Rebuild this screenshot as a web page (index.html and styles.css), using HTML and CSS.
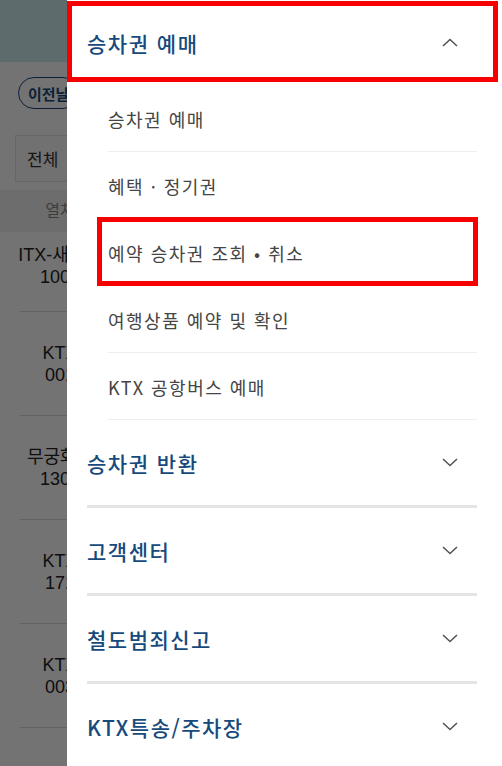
FILE: index.html
```html
<!DOCTYPE html>
<html lang="ko">
<head>
    <meta charset="UTF-8">
    <meta name="viewport" content="width=device-width, initial-scale=1.0">
    <title>승차권 예매 메뉴</title>
    <link rel="stylesheet" href="styles.css">
</head>
<body>

    <!-- 뒤에 깔린 열차 조회 화면 -->
    <div class="page">
        <div class="page-top"></div>
        <div class="page-tools">
            <button class="pill">이전날</button>
            <div class="select-box">전체</div>
        </div>
        <div class="train-table">
            <div class="train-head">
                <div class="train-cell">열차</div>
            </div>
            <div class="train-row first">
                <div class="train-cell"><span>ITX-새마을</span><span>1004</span></div>
            </div>
            <div class="train-row">
                <div class="train-cell"><span>KTX</span><span>001</span></div>
            </div>
            <div class="train-row">
                <div class="train-cell"><span>무궁화호</span><span>1302</span></div>
            </div>
            <div class="train-row">
                <div class="train-cell"><span>KTX</span><span>171</span></div>
            </div>
            <div class="train-row">
                <div class="train-cell"><span>KTX</span><span>003</span></div>
            </div>
            <div class="train-row">
                <div class="train-cell"><span>무궁화호</span></div>
            </div>
        </div>
    </div>

    <div class="dim"></div>

    <!-- 전체 메뉴 -->
    <aside class="drawer">
        <div class="menu-section open">
            <div class="menu-head marked">
                <span class="menu-title">승차권 예매</span>
                <svg class="chevron" width="16" height="9" viewBox="0 0 16 9"><polyline points="1,8 8,1.5 15,8"/></svg>
            </div>
            <ul class="sub-menu">
                <li>승차권 예매</li>
                <li>혜택 · 정기권</li>
                <li class="marked">예약 승차권 조회 • 취소</li>
                <li>여행상품 예약 및 확인</li>
                <li>KTX 공항버스 예매</li>
            </ul>
        </div>
        <div class="menu-section">
            <div class="menu-head">
                <span class="menu-title">승차권 반환</span>
                <svg class="chevron" width="16" height="9" viewBox="0 0 16 9"><polyline points="1,1 8,7.5 15,1"/></svg>
            </div>
        </div>
        <div class="menu-section">
            <div class="menu-head">
                <span class="menu-title">고객센터</span>
                <svg class="chevron" width="16" height="9" viewBox="0 0 16 9"><polyline points="1,1 8,7.5 15,1"/></svg>
            </div>
        </div>
        <div class="menu-section">
            <div class="menu-head">
                <span class="menu-title">철도범죄신고</span>
                <svg class="chevron" width="16" height="9" viewBox="0 0 16 9"><polyline points="1,1 8,7.5 15,1"/></svg>
            </div>
        </div>
        <div class="menu-section">
            <div class="menu-head">
                <span class="menu-title">KTX특송/주차장</span>
                <svg class="chevron" width="16" height="9" viewBox="0 0 16 9"><polyline points="1,1 8,7.5 15,1"/></svg>
            </div>
        </div>
    </aside>

</body>
</html>
```

FILE: styles.css
```css
html {
    overflow: hidden;
}

body {
    font-family: "Noto Sans CJK KR", "Noto Sans", sans-serif;
    margin: 0;
    height: 766px;
    overflow: hidden;
    position: relative;
    background-color: #fff;
}

/* 뒤 화면 */
.page {
    height: 766px;
    overflow: hidden;
    color: #222;
}

.page-top {
    height: 62px;
    background-color: #d0eef2;
}

.page-tools {
    display: flex;
    flex-direction: column;
    align-items: flex-start;
    padding: 15px 0 0 18px;
}

.pill {
    height: 32px;
    padding: 0 9px;
    border: 1.5px solid #1d4a78;
    border-radius: 16px;
    background: #fff;
    color: #1d4a78;
    font-family: inherit;
    font-size: 15px;
    font-weight: 700;
}

.select-box {
    margin: 26px 0 0 -3px;
    height: 45px;
    width: 120px;
    padding-left: 11px;
    border: 1px solid #e2e2e2;
    background: #fafafa;
    font-size: 17px;
    line-height: 45px;
    color: #333;
}

.train-table {
    margin-top: 8px;
    padding-left: 20px;
}

.train-head {
    height: 42px;
    margin-left: -20px;
    padding-left: 20px;
    background-color: #f1f1f1;
    display: flex;
    align-items: center;
}

.train-head .train-cell {
    color: #888;
    font-size: 16px;
}

.train-row {
    height: 103px;
    border-bottom: 1px solid #dcdcdc;
    display: flex;
    align-items: center;
}

.train-row.first {
    height: 80px;
    align-items: flex-start;
    padding-top: 12px;
    box-sizing: border-box;
}

.train-cell {
    width: 80px;
    display: flex;
    flex-direction: column;
    align-items: center;
    white-space: nowrap;
    font-family: "Liberation Sans", "Noto Sans CJK KR", sans-serif;
    font-size: 18px;
    line-height: 22px;
}

.dim {
    position: absolute;
    inset: 0;
    background-color: rgba(0, 0, 0, 0.55);
}

/* 메뉴 */
.drawer {
    position: absolute;
    top: 0;
    left: 67px;
    right: 0;
    bottom: 0;
    background-color: #fff;
}

.menu-section {
    margin: 0 25px 0 20px;
    border-bottom: 3px solid #e4e4e4;
}

.menu-section.open {
    border-bottom: none;
}

.menu-head {
    height: 85px;
    display: flex;
    align-items: center;
    justify-content: space-between;
    padding-right: 19px;
    position: relative;
}

.menu-title {
    color: #174a7c;
    font-size: 21px;
    font-weight: 500;
    letter-spacing: 1.5px;
}

.chevron {
    fill: none;
    stroke: #555;
    stroke-width: 1.6;
}

.sub-menu {
    list-style: none;
    margin: 0 0 0 21px;
    padding: 0;
}

.sub-menu li {
    height: 67px;
    border-bottom: 1px solid #eeeeee;
    display: flex;
    align-items: center;
    padding-top: 2px;
    box-sizing: border-box;
    color: #454545;
    font-size: 18px;
    letter-spacing: 1.5px;
    position: relative;
}

/* 빨간 표시 박스 */
.marked::after {
    content: "";
    position: absolute;
    border: 5px solid #f80000;
    pointer-events: none;
}

.menu-head.marked::after {
    left: -20px;
    right: -21px;
    top: 1px;
    bottom: 3px;
}

.sub-menu li.marked::after {
    left: -11px;
    right: -1px;
    top: -2px;
    bottom: -1px;
}
```
